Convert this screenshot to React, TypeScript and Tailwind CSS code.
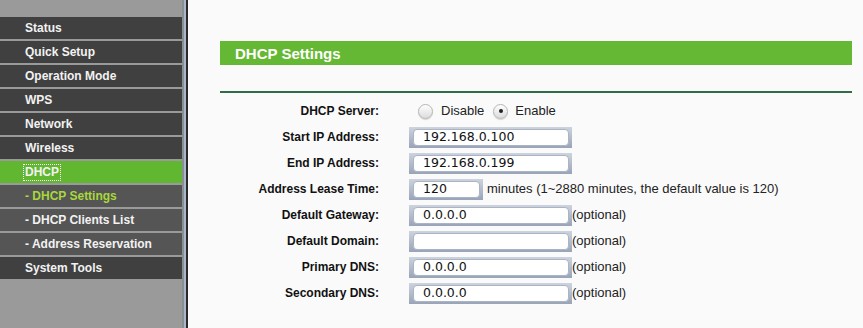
import { useState } from 'react';

const menu = [
    { label: 'Status', kind: 'main' },
    { label: 'Quick Setup', kind: 'main' },
    { label: 'Operation Mode', kind: 'main' },
    { label: 'WPS', kind: 'main' },
    { label: 'Network', kind: 'main' },
    { label: 'Wireless', kind: 'main' },
    { label: 'DHCP', kind: 'active' },
    { label: '- DHCP Settings', kind: 'subActive' },
    { label: '- DHCP Clients List', kind: 'sub' },
    { label: '- Address Reservation', kind: 'sub' },
    { label: 'System Tools', kind: 'main' },
];

function MenuRow({ label, kind }: { label: string; kind: string }) {
    const bg =
        kind === 'active' ? 'bg-[#62b731]' : kind === 'main' ? 'bg-[#404040]' : 'bg-[#555555]';
    const text = kind === 'subActive' ? 'text-[#a8d83a]' : 'text-[#f2f2f2]';
    return (
        <div className={`h-[22px] mb-[2px] flex items-center pl-[25px] ${bg}`}>
            <span
                className={`text-[12px] font-bold leading-[15px] ${text} ${kind === 'active' ? 'outline-1 outline-dotted outline-white -ml-[1px] px-[1px]' : ''}`}
            >
                {label}
            </span>
        </div>
    );
}

function TextBox({ value, width }: { value: string; width: string }) {
    return (
        <div className={`${width} h-[21px] pl-[4px] pr-[3px] py-[2px] bg-gradient-to-b from-[#cdd4de] via-[#b3bccb] to-[#98a4b7]`}>
            <div className="h-full rounded-[4px] bg-white border border-[#aab4c4] pl-[9px] flex items-center text-[12.5px] text-[#111] font-['DejaVu_Sans',sans-serif] leading-none">
                {value}
            </div>
        </div>
    );
}

function Radio({ checked }: { checked?: boolean }) {
    return (
        <span className="w-[15px] h-[15px] rounded-full border border-[#b5b5b5] bg-gradient-to-b from-[#ffffff] to-[#dcdcdc] flex items-center justify-center shadow-[0_1px_1px_rgba(0,0,0,0.15)]">
            {checked && <span className="w-[4px] h-[4px] rounded-full bg-[#222]" />}
        </span>
    );
}

const fields = [
    { label: 'Start IP Address:', value: '192.168.0.100' },
    { label: 'End IP Address:', value: '192.168.0.199' },
    { label: 'Address Lease Time:', value: '120', short: true },
    { label: 'Default Gateway:', value: '0.0.0.0', optional: true },
    { label: 'Default Domain:', value: '', optional: true },
    { label: 'Primary DNS:', value: '0.0.0.0', optional: true },
    { label: 'Secondary DNS:', value: '0.0.0.0', optional: true },
];

export default function App() {
    const [enabled] = useState(true);

    return (
        <div className="w-[863px] h-[328px] flex overflow-hidden font-['Liberation_Sans',Arial,sans-serif]">
            {/* left menu */}
            <div className="w-[182px] h-full bg-[#9a9a9a] pt-[17px]">
                {menu.map((m) => (
                    <MenuRow key={m.label} label={m.label} kind={m.kind} />
                ))}
            </div>
            <div className="w-[2px] h-full bg-[#8a8f96]" />
            <div className="w-[2px] h-full bg-[#a9b6c9]" />
            <div className="w-[2px] h-full bg-[#2a2a2a]" />

            {/* content */}
            <div className="flex-1 h-full bg-[#fafafa] pl-[32px] pt-[41px] pr-[11px]">
                <div className="h-[24px] bg-[#65b833] flex items-center pl-[15px]">
                    <span className="text-white font-bold text-[15px] leading-none">DHCP Settings</span>
                </div>
                <div className="mt-[26px] h-[2px] bg-[#2f6d49]" />

                <div className="mt-[5px]">
                    <div className="h-[26px] flex items-center">
                        <div className="w-[159px] text-right text-[12px] font-bold text-[#111]">DHCP Server:</div>
                        <div className="ml-[39px] flex items-center text-[13px] text-[#222]">
                            <Radio checked={!enabled} />
                            <span className="ml-[8px]">Disable</span>
                            <span className="ml-[9px]">
                                <Radio checked={enabled} />
                            </span>
                            <span className="ml-[7px]">Enable</span>
                        </div>
                    </div>
                    {fields.map((f) => (
                        <div key={f.label} className="h-[26px] flex items-center">
                            <div className="w-[159px] text-right text-[12px] font-bold text-[#111]">{f.label}</div>
                            <div className="ml-[30px] flex items-center">
                                <TextBox value={f.value} width={f.short ? 'w-[74px]' : 'w-[163px]'} />
                                {f.short && (
                                    <span className="ml-[4px] text-[13px] text-[#222]">
                                        minutes (1~2880 minutes, the default value is 120)
                                    </span>
                                )}
                                {f.optional && <span className="text-[13px] text-[#222]">(optional)</span>}
                            </div>
                        </div>
                    ))}
                </div>
            </div>
        </div>
    );
}
